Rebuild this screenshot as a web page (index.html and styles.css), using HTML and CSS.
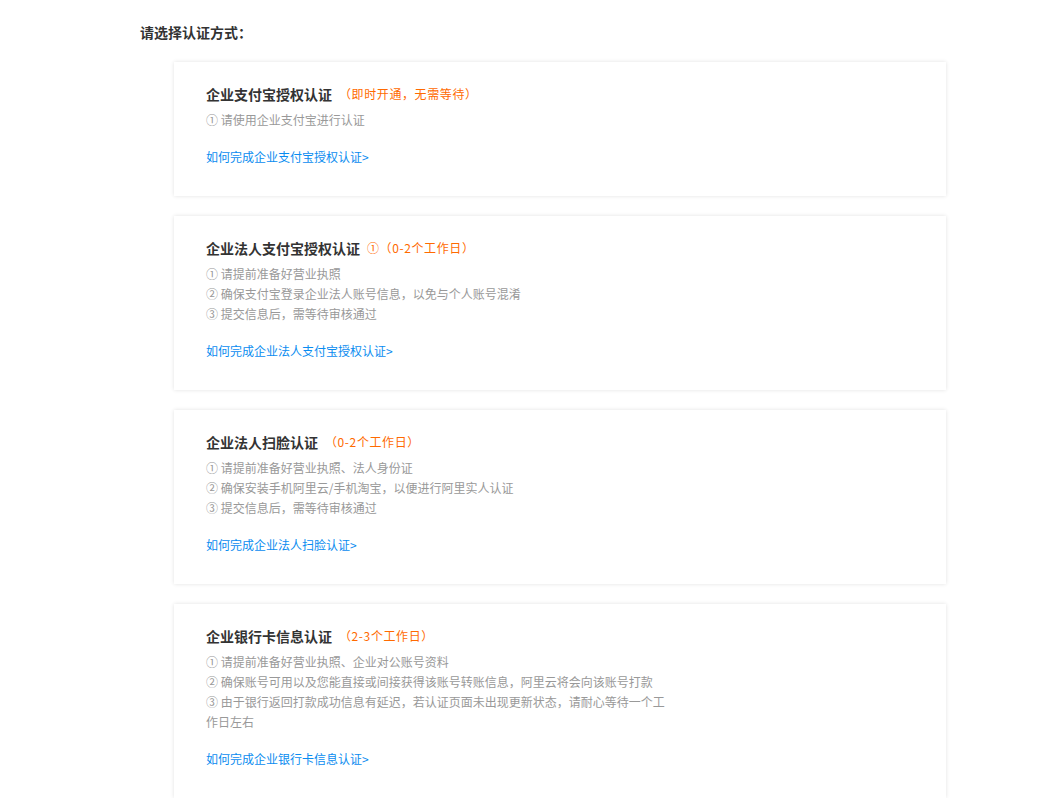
FILE: index.html
```html
<!DOCTYPE html>
<html>
<head>
    <meta charset="utf-8">
    <link rel="stylesheet" href="styles.css">
</head>
<body>

<div class="page">
    <div class="page-title">请选择认证方式：</div>

    <div class="card-list">
        <div class="card">
            <div class="card-head">
                <span class="card-title">企业支付宝授权认证</span>
                <span class="card-note">（即时开通，无需等待）</span>
            </div>
            <div class="steps">
                <div class="step">① 请使用企业支付宝进行认证</div>
            </div>
            <a class="how-link" href="#">如何完成企业支付宝授权认证&gt;</a>
        </div>

        <div class="card">
            <div class="card-head">
                <span class="card-title">企业法人支付宝授权认证</span>
                <span class="card-note">①（0-2个工作日）</span>
            </div>
            <div class="steps">
                <div class="step">① 请提前准备好营业执照</div>
                <div class="step">② 确保支付宝登录企业法人账号信息，以免与个人账号混淆</div>
                <div class="step">③ 提交信息后，需等待审核通过</div>
            </div>
            <a class="how-link" href="#">如何完成企业法人支付宝授权认证&gt;</a>
        </div>

        <div class="card">
            <div class="card-head">
                <span class="card-title">企业法人扫脸认证</span>
                <span class="card-note">（0-2个工作日）</span>
            </div>
            <div class="steps">
                <div class="step">① 请提前准备好营业执照、法人身份证</div>
                <div class="step">② 确保安装手机阿里云/手机淘宝，以便进行阿里实人认证</div>
                <div class="step">③ 提交信息后，需等待审核通过</div>
            </div>
            <a class="how-link" href="#">如何完成企业法人扫脸认证&gt;</a>
        </div>

        <div class="card">
            <div class="card-head">
                <span class="card-title">企业银行卡信息认证</span>
                <span class="card-note">（2-3个工作日）</span>
            </div>
            <div class="steps">
                <div class="step">① 请提前准备好营业执照、企业对公账号资料</div>
                <div class="step">② 确保账号可用以及您能直接或间接获得该账号转账信息，阿里云将会向该账号打款</div>
                <div class="step">③ 由于银行返回打款成功信息有延迟，若认证页面未出现更新状态，请耐心等待一个工作日左右</div>
            </div>
            <a class="how-link" href="#">如何完成企业银行卡信息认证&gt;</a>
        </div>
    </div>
</div>

</body>
</html>
```

FILE: styles.css
```css
body, html {
    margin: 0;
    background-color: #fff;
    font-family: "Microsoft YaHei", "Noto Sans CJK SC", "Noto Sans", sans-serif;
    color: #333;
}

.page {
    padding: 22px 0 0 140px;
}

.page-title {
    height: 20px;
    font-size: 14px;
    line-height: 20px;
    font-weight: bold;
    color: #333;
}

.card-list {
    display: flex;
    flex-direction: column;
    gap: 20px;
    margin: 20px 0 0 34px;
    width: 772px;
}

.card {
    background-color: #fff;
    box-shadow: 0 0 4px rgba(0, 0, 0, 0.12);
    padding: 22px 32px 29px;
}

.card-head {
    display: flex;
    align-items: center;
    height: 20px;
}

.card-title {
    font-size: 14px;
    line-height: 20px;
    font-weight: bold;
    color: #333;
}

.card-note {
    margin-left: 7px;
    font-size: 12px;
    line-height: 20px;
    letter-spacing: 0.6px;
    color: #ff6a00;
}

.steps {
    margin-top: 6px;
    max-width: 466px;
}

.step {
    font-size: 12px;
    line-height: 20px;
    color: #999;
}

.how-link {
    display: block;
    height: 20px;
    margin-top: 17px;
    font-size: 12px;
    line-height: 20px;
    color: #0a8cf0;
    text-decoration: none;
}
```
